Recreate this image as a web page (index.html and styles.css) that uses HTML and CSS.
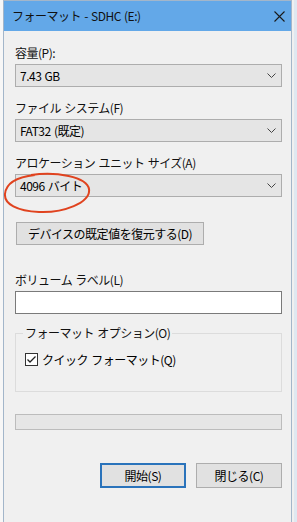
FILE: index.html
```html
<!DOCTYPE html>
<html lang="ja">
<head>
<meta charset="utf-8">
<title>フォーマット - SDHC (E:)</title>
<link rel="stylesheet" href="styles.css">
</head>
<body>
<div class="desk">
  <div class="window">
    <div class="titlebar">
      <span class="title">フォーマット - SDHC (E:)</span>
      <svg class="close" width="11" height="11" viewBox="0 0 11 11"><path d="M0.5 0.5 L10.5 10.5 M10.5 0.5 L0.5 10.5" stroke="#1a1a1a" stroke-width="1.1" fill="none"/></svg>
    </div>
    <div class="content">
      <div class="field">
        <div class="label">容量(P):</div>
        <div class="select"><span>7.43 GB</span><svg class="chev" width="9" height="5" viewBox="0 0 9 5"><path d="M0.5 0.5 L4.5 4.5 L8.5 0.5" stroke="#444" stroke-width="1" fill="none"/></svg></div>
      </div>
      <div class="field">
        <div class="label">ファイル システム(F)</div>
        <div class="select"><span>FAT32 (既定)</span><svg class="chev" width="9" height="5" viewBox="0 0 9 5"><path d="M0.5 0.5 L4.5 4.5 L8.5 0.5" stroke="#444" stroke-width="1" fill="none"/></svg></div>
      </div>
      <div class="field">
        <div class="label">アロケーション ユニット サイズ(A)</div>
        <div class="select"><span>4096 バイト</span><svg class="chev" width="9" height="5" viewBox="0 0 9 5"><path d="M0.5 0.5 L4.5 4.5 L8.5 0.5" stroke="#444" stroke-width="1" fill="none"/></svg></div>
      </div>
      <div class="btn restore">デバイスの既定値を復元する(D)</div>
      <div class="label vol">ボリューム ラベル(L)</div>
      <div class="input"></div>
      <fieldset class="group">
        <legend>フォーマット オプション(O)</legend>
        <div class="check">
          <svg class="box" width="13" height="13" viewBox="0 0 13 13"><rect x="0.5" y="0.5" width="12" height="12" fill="#fff" stroke="#333"/><path d="M2.5 6.5 L5 9 L10.5 3.5" stroke="#222" stroke-width="1.3" fill="none"/></svg>
          <span>クイック フォーマット(Q)</span>
        </div>
      </fieldset>
      <div class="progress"></div>
      <div class="actions">
        <div class="btn primary">開始(S)</div>
        <div class="btn">閉じる(C)</div>
      </div>
    </div>
    <svg class="ring" width="94" height="46" viewBox="0 0 94 46"><path d="M30 4 C55 0 86 6 88 18 C90 32 62 42 38 41 C16 40 3 33 4 23 C5 12 16 6 34 4" stroke="#e0431f" stroke-width="2" fill="none"/></svg>
  </div>
</div>
</body>
</html>
```
FILE: styles.css
```css
html, body {
  margin: 0;
  padding: 0;
}
body {
  background: #eef1f4;
  font-family: "Noto Sans CJK JP", "Noto Sans", sans-serif;
  font-size: 12px;
  letter-spacing: -0.5px;
  word-spacing: 1px;
  color: #000;
}
.desk {
  padding: 0 3px 0 3px;
  height: 522px;
  background: linear-gradient(to right, #f7f7f7 0 3px, #f0f0f0 3px, #f0f0f0 calc(100% - 3px), #dfe8f1 calc(100% - 3px));
}
.window {
  position: relative;
  width: 289px;
  height: 522px;
  box-sizing: border-box;
  border: 1px solid #a3b6ca;
  border-bottom: none;
  background: #f0f0f0;
}
.titlebar {
  height: 30px;
  background: #63a8e8;
  display: flex;
  align-items: center;
  justify-content: space-between;
  padding: 0 6px 0 8px;
}
.title {
  font-size: 12px;
  line-height: 16px;
  color: #111;
}
.close {
  margin-top: 1px;
}
.content {
  padding: 14px 9px 0 11px;
}
.field {
  margin-bottom: 13px;
}
.label {
  line-height: 16px;
  margin-bottom: 3px;
  color: #111;
}
.select {
  height: 23px;
  box-sizing: border-box;
  border: 1px solid #adadad;
  background: #e5e5e5;
  display: flex;
  align-items: center;
  justify-content: space-between;
  padding: 0 5px 0 4px;
}
.btn {
  height: 23px;
  box-sizing: border-box;
  border: 1px solid #adadad;
  background: #e1e1e1;
  display: flex;
  align-items: center;
  justify-content: center;
}
.restore {
  width: 188px;
  margin: 25px 0 0 1px;
}
.vol {
  margin-top: 27px;
  margin-bottom: 3px;
}
.input {
  height: 23px;
  box-sizing: border-box;
  border: 1px solid #7a7a7a;
  background: #fff;
}
.group {
  margin: 11px 0 0 0;
  padding: 10px 9px 0 9px;
  border: 1px solid #dcdcdc;
  box-sizing: border-box;
  height: 67px;
}
.group legend {
  padding: 0 2px;
  margin-left: -2px;
  line-height: 16px;
  color: #111;
}
.check {
  display: flex;
  align-items: center;
  gap: 4px;
}
.progress {
  margin-top: 22px;
  height: 16px;
  box-sizing: border-box;
  border: 1px solid #bcbcbc;
  background: #e6e6e6;
}
.actions {
  display: flex;
  justify-content: flex-end;
  gap: 10px;
  margin-top: 33px;
}
.actions .btn {
  width: 86px;
  height: 25px;
}
.actions .primary {
  border: 2px solid #2a73bb;
}
.ring {
  position: absolute;
  left: -3px;
  top: 170px;
}
```
